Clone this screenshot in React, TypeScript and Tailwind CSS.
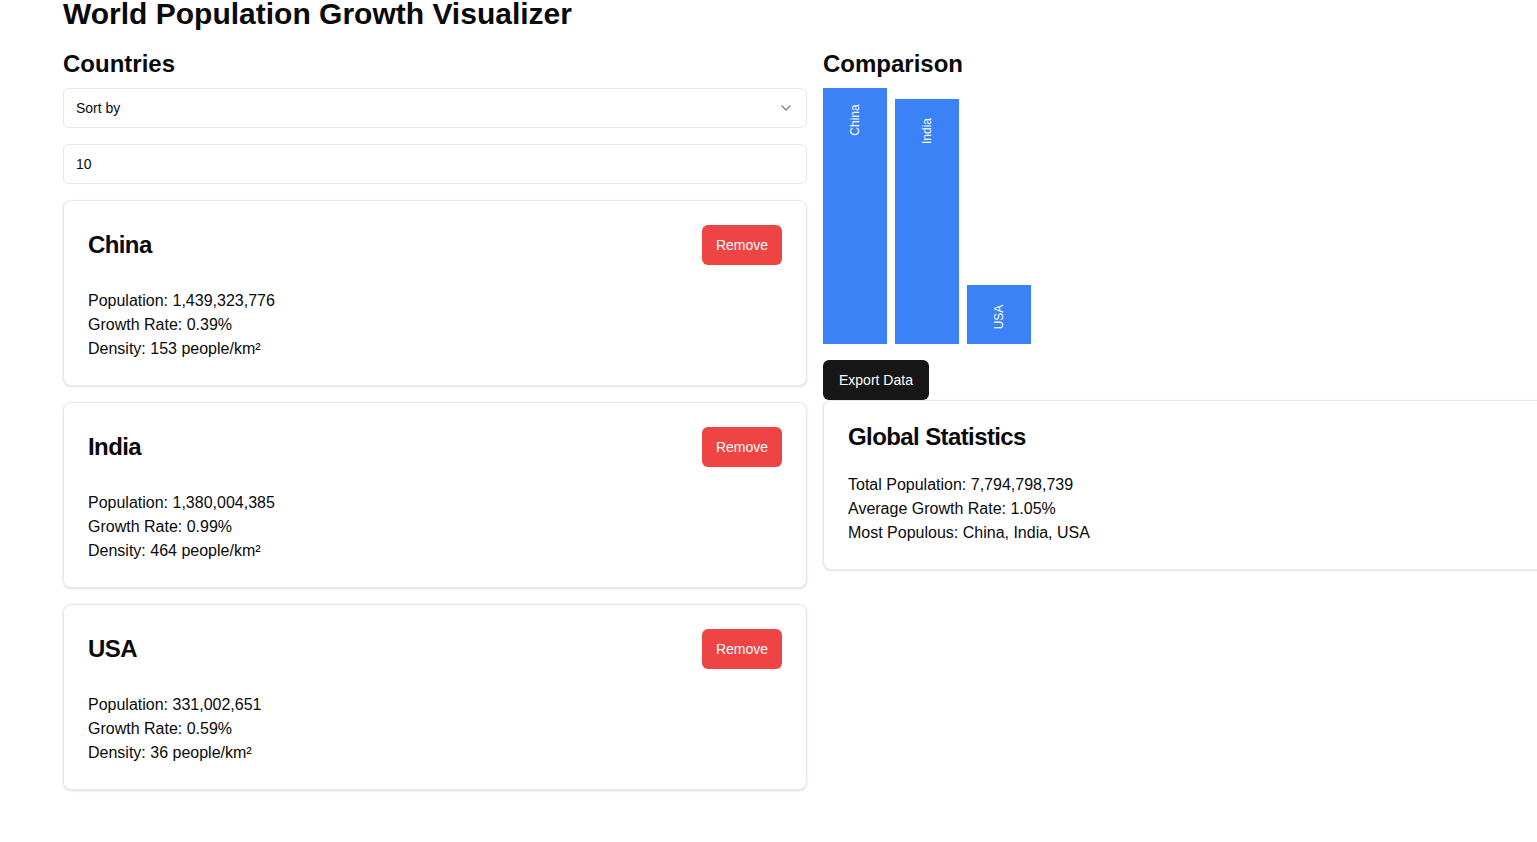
import { ChevronDown } from 'lucide-react'

type Country = {
  name: string
  population: number
  growthRate: number
  density: number
}

const countries: Country[] = [
  { name: 'China', population: 1439323776, growthRate: 0.39, density: 153 },
  { name: 'India', population: 1380004385, growthRate: 0.99, density: 464 },
  { name: 'USA', population: 331002651, growthRate: 0.59, density: 36 },
]

const maxPop = Math.max(...countries.map((c) => c.population))

function CountryCard({ country }: { country: Country }) {
  return (
    <div className="rounded-lg border border-gray-200 bg-white shadow-sm">
      <div className="flex items-center justify-between p-6">
        <h3 className="text-2xl leading-none font-semibold tracking-tight">{country.name}</h3>
        <button className="h-10 w-20 rounded-md bg-[#ef4444] text-sm text-white">Remove</button>
      </div>
      <div className="px-6 pb-6 text-base leading-6">
        <p>Population: {country.population.toLocaleString('en-US')}</p>
        <p>Growth Rate: {country.growthRate}%</p>
        <p>Density: {country.density} people/km²</p>
      </div>
    </div>
  )
}

export default function App() {
  return (
    <div
      className="min-h-screen overflow-hidden bg-white text-neutral-950"
      style={{ fontFamily: '"Liberation Sans", Arial, sans-serif' }}
    >
      <div className="mt-[-4px] pl-[63px]">
        <h1 className="mb-4 text-3xl font-semibold">World Population Growth Visualizer</h1>

        <div className="grid grid-cols-[744px_744px] gap-4">
          {/* left column */}
          <div>
            <h2 className="mb-2 text-2xl font-semibold">Countries</h2>
            <div className="flex flex-col gap-4">
              <button className="flex h-10 w-full items-center justify-between rounded-md border border-gray-200 bg-white px-3 text-sm">
                <span>Sort by</span>
                <ChevronDown className="h-4 w-4 opacity-50" />
              </button>
              <input
                className="h-10 w-full rounded-md border border-gray-200 px-3 text-sm outline-none"
                defaultValue="10"
              />
              {countries.map((c) => (
                <CountryCard key={c.name} country={c} />
              ))}
            </div>
          </div>

          {/* right column */}
          <div>
            <h2 className="mb-2 text-2xl font-semibold">Comparison</h2>
            <div className="flex h-64 items-end gap-2">
              {countries.map((c) => (
                <div
                  key={c.name}
                  className="flex w-16 flex-col items-center bg-[#3b82f6]"
                  style={{ height: `${(c.population / maxPop) * 100}%` }}
                >
                  <span className="mt-6 -rotate-90 text-xs leading-4 whitespace-nowrap text-white">
                    {c.name}
                  </span>
                </div>
              ))}
            </div>
            <button className="mt-4 h-10 rounded-md bg-neutral-900 px-4 text-sm text-white">
              Export Data
            </button>
            <div className="rounded-lg border border-gray-200 bg-white shadow-sm">
              <div className="p-6">
                <h3 className="text-2xl leading-none font-semibold tracking-tight">Global Statistics</h3>
              </div>
              <div className="px-6 pb-6 text-base leading-6">
                <p>Total Population: 7,794,798,739</p>
                <p>Average Growth Rate: 1.05%</p>
                <p>Most Populous: China, India, USA</p>
              </div>
            </div>
          </div>
        </div>
      </div>
    </div>
  )
}
